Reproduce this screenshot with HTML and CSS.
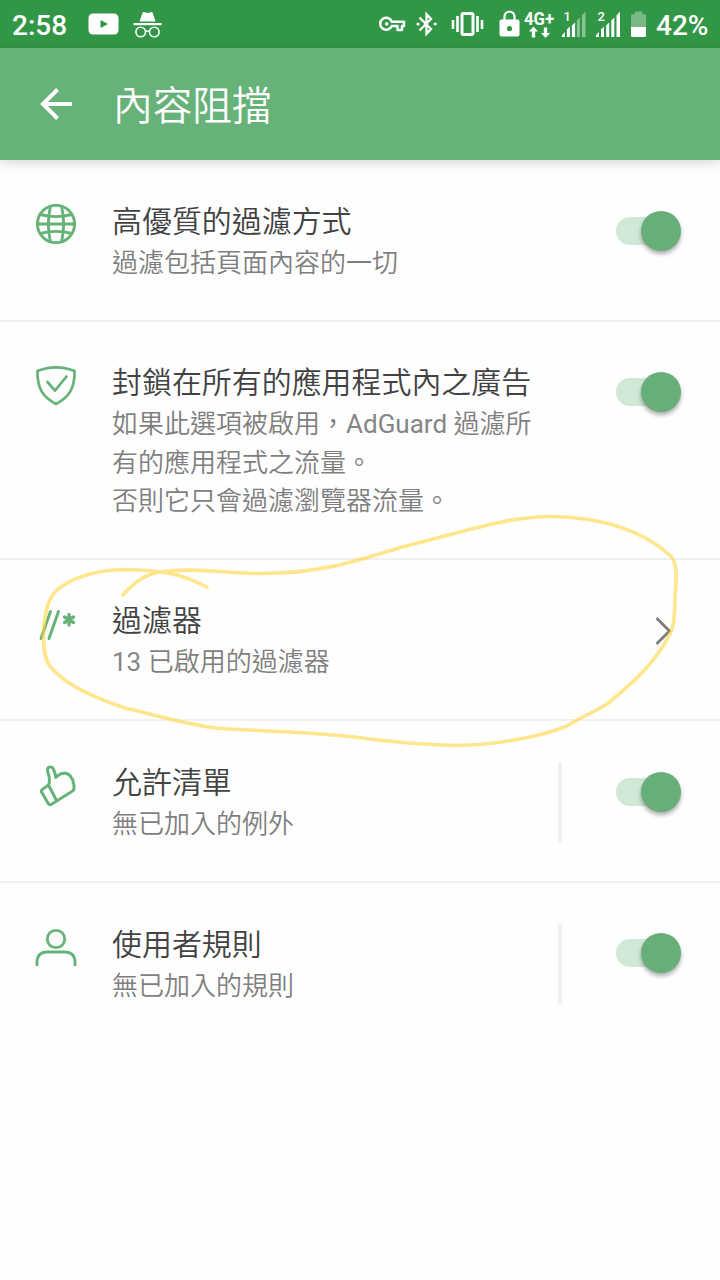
FILE: index.html
```html
<!DOCTYPE html>
<html lang="zh-Hant">
<head>
<meta charset="utf-8">
<title>內容阻擋</title>
<link rel="stylesheet" href="styles.css">
</head>
<body>
<div class="screen">
  <div class="status">
    <span class="clock">2:58</span>
    <svg class="youtube" width="32" height="24" viewBox="88 12 32 24"><rect x="88.500" y="13.500" width="30" height="21" rx="4.500" fill="#fff"/><path d="M100.500 20v8l7.500-4z" fill="#319746"/></svg>
    <svg class="incognito" width="30" height="30" viewBox="133 10 30 30"><path d="M139.500 21.500l3-8.500q.6-1.300 2-.8l3.300.8 3-.8q1.400-.4 2 .8l2.700 8.500z" fill="#fff"/><path d="M133.500 23h28v2.200h-28z" fill="#fff"/><g fill="none" stroke="#fff" stroke-width="1.600"><circle cx="140.700" cy="32" r="4.800"/><circle cx="154.300" cy="32" r="4.800"/><path d="M145.500 31.500q2-1 4 0"/></g></svg>
    <svg class="indicators" width="274" height="36" viewBox="376 8 274 36">
      <g fill="none" stroke="#fff" stroke-width="2.500" stroke-linejoin="round">
        <path d="M391.800 21.700h12.200v4.200h-2v4h-4.500v-4h-5.700a6 6 0 1 1 0-4.200z"/>
        <path stroke-width="2.300" stroke-linejoin="miter" d="M419.500 17.500l11.500 11.500-4.500 4.800V14.200l4.500 4.800-11.500 11.500"/>
        <rect x="462" y="13.500" width="11" height="21" rx="1.500" stroke-width="3"/>
        <path stroke-width="2.600" d="M457.500 16v16M453 20v9M477.500 16v16M482 20v9"/>
        <path stroke-width="2.300" d="M504.500 20v-3.300a5 5 0 0 1 10 0V20"/>
      </g>
      <circle cx="386.700" cy="23.900" r="1.800" fill="#fff"/>
      <circle cx="418" cy="24" r="1.600" fill="#fff"/><circle cx="435.200" cy="24" r="1.600" fill="#fff"/>
      <rect x="499.500" y="19.500" width="20" height="17" rx="2" fill="#fff"/><circle cx="509.500" cy="28.500" r="2.600" fill="#319746"/>
      <path d="M533.500 26.500l4.500 5h-2.800v6h-3.400v-6H529zM545.500 38l-4.500-5h2.800v-5.500h3.400V33h2.800z" fill="#fff"/>
      <text class="network" x="524" y="24.500" textLength="30" lengthAdjust="spacingAndGlyphs">4G+</text>
      <text class="sim" x="563.500" y="20.500">1</text><text class="sim" x="597.500" y="20.500">2</text>
      <path fill="#fff" d="M562 37v-2l3-3v5zM566.900 37v-7.500l3-3V37zM571.900 37V25.500l3.200-3V37z"/>
      <path fill="#8bc394" d="M576.900 37V20.500l3-3V37zM582 37V15.500l3.500-4V37z"/>
      <path fill="#fff" d="M596 37v-2l3-3v5zM601 37v-7.500l3-3V37zM606.200 37V25.500l3-3V37zM611.300 37V20.500l3-3V37zM616.500 37V15.500l3.500-4V37z"/>
      <path fill="#77b884" d="M635 11.500h7V14h2.500q1.500 0 1.500 1.500V27h-15V15.500q0-1.500 1.500-1.500h2.500z"/><path fill="#fff" d="M631 27h15v8.500q0 1.500-1.500 1.500h-12q-1.500 0-1.500-1.500z"/>
    </svg>
    <span class="percent">42%</span>
  </div>
  <header class="appbar">
    <svg class="back" width="36" height="36" viewBox="38 86 36 36" fill="none" stroke="#fff" stroke-width="4"><path d="M72 104H43M57.500 89.500L43 104l14.500 14.500"/></svg>
    <h1 class="heading">內容阻擋</h1>
  </header>
  <main class="list">
    <section class="row">
      <svg class="icon" width="44" height="44" viewBox="34 202 44 44" fill="none" stroke="#67b279" stroke-width="2.900"><circle cx="56" cy="224" r="18.600"/><path d="M37.500 224h37M40 214.500q16 4.200 32 0M40 233.500q16-4.200 32 0M50.500 206q-4.200 18 0 36M61.500 206q4.200 18 0 36"/></svg>
      <div class="copy"><h2 class="title">高優質的過濾方式</h2><p class="desc">過濾包括頁面內容的一切</p></div>
      <div class="action"><span class="toggle"></span></div>
    </section>
    <section class="row">
      <svg class="icon" width="44" height="44" viewBox="34 363.500 44 44" fill="none" stroke="#67b279" stroke-width="2.700" stroke-linejoin="round"><path d="M56 366.800q-10 0-18.600 3.700c0 16 4 25.500 18.600 33 14.600-7.500 18.600-17 18.600-33q-8.600-3.700-18.600-3.700z"/><path stroke-linecap="round" d="M47.500 381.500l7.500 8.700 11.500-14.200"/></svg>
      <div class="copy"><h2 class="title">封鎖在所有的應用程式內之廣告</h2><p class="desc">如果此選項被啟用，<span class="latin">AdGuard </span>過濾所<br>有的應用程式之流量。<br>否則它只會過濾瀏覽器流量。</p></div>
      <div class="action"><span class="toggle"></span></div>
    </section>
    <section class="row">
      <svg class="icon" width="44" height="44" viewBox="34 602 44 44" fill="none" stroke="#67b279" stroke-width="3" stroke-linecap="round"><path d="M50.500 611.500L41 638.500M58.500 611.500L49 638.500"/><path stroke-width="3.300" d="M69 614.500v10.500M64.500 617l9 5.500M73.500 617l-9 5.500"/></svg>
      <div class="copy"><h2 class="title">過濾器</h2><p class="desc"><span class="latin">13 </span>已啟用的過濾器</p></div>
      <div class="action"><svg class="chevron" width="20" height="32" viewBox="654 616 20 32" fill="none" stroke="#7d7d7d" stroke-width="2.800"><path d="M656.500 619L669.500 632 656.500 645"/></svg></div>
    </section>
    <section class="row">
      <svg class="icon" width="44" height="44" viewBox="34 763.500 44 44" fill="none" stroke="#67b279" stroke-width="3" stroke-linejoin="round"><path d="M48.500 785.500c1.800-3.500 1.200-7.500-.8-13.500-1.200-4.800 4-6 5.800-2.300q1.800 3.500 2.200 8.300 4-4.500 9.300-4.300 5 .5 6.300 4.800 2.300 1.500 1.700 4.500 1.300 2.200.9 4.300.8 3-1.700 4.500L51.500 804.700q-2 1.100-3.300-.8l-6.500-11.200q-1-1.700.6-2.700z"/><path d="M48.500 785.500l8 15.500"/></svg>
      <div class="copy"><h2 class="title">允許清單</h2><p class="desc">無已加入的例外</p></div>
      <div class="action split"><span class="toggle"></span></div>
    </section>
    <section class="row">
      <svg class="icon" width="44" height="44" viewBox="34 925 44 44" fill="none" stroke="#67b279" stroke-width="2.800"><circle cx="56" cy="939" r="8.700"/><path d="M37 966v-3.500q0-10.500 10.500-10.500h17q10.500 0 10.500 10.500V966"/></svg>
      <div class="copy"><h2 class="title">使用者規則</h2><p class="desc">無已加入的規則</p></div>
      <div class="action split"><span class="toggle"></span></div>
    </section>
  </main>
  <svg class="scribble" width="720" height="260" viewBox="0 500 720 260"><path d="M123 595C134 582 146 574 160 572C195 567 225 573.500 262 573.500C320 573 350 563 402 547C455 535 500 517 550 516.500C600 517 641 529 671 556C677 564 676.500 575 675.500 590C674 608 676 620 671 632C657 660 637 680 607 704C596 711 581 717 567 726C542 736 500 745 453 745.500C405 744 375 740 350 736.500C300 731 250 731 215 728C180 723 155 715 125 708C95 698 64 685 49 665C43 655 43.500 641 43.500 632C45 613 47 599 58 589C75 576 100 570 125 569.500C160 570 180 573 207 587"/></svg>
</div>
</body>
</html>
```
FILE: styles.css
```css
* { box-sizing: border-box; }
body { margin: 0; background: #fff; font-family: Roboto, "Noto Sans CJK TC", sans-serif; }
.screen { position: relative; width: 720px; height: 1280px; overflow: hidden; background: #fefefe; }
.status { display: flex; align-items: center; height: 48px; padding-left: 12px; background: #319746; color: #fff; }
.clock, .percent { font-size: 28px; font-weight: 500; line-height: 48px; padding-top: 3px; }
.clock { width: 76px; }
.incognito { margin: 2px 0 0 13px; }
.indicators { margin: 4px 6px 0 213px; flex: none; }
.network { font: 700 17.500px Roboto, sans-serif; fill: #fff; }
.sim { font: 500 13px Roboto, sans-serif; fill: #fff; }
.appbar { display: flex; align-items: center; height: 112px; padding-left: 38px; background: #67b279; color: #fff; box-shadow: 0 2px 12px rgba(0, 0, 0, .18); }
.heading { margin: 5px 0 0 39px; font-family: Roboto, "Noto Sans CJK TC DemiLight", "Noto Sans CJK TC", sans-serif; font-size: 39.700px; font-weight: 350; line-height: 56px; }
.row { display: grid; grid-template-columns: 112px 448px 160px; padding: 39px 0 38.200px; border-bottom: 2px solid #f1f1f1; }
.row:last-child { border-bottom-color: transparent; }
.icon { margin: 3px 0 0 34px; }
.copy { padding-top: .8px; margin-bottom: -.8px; font-family: Roboto, "Noto Sans CJK TC DemiLight", "Noto Sans CJK TC", sans-serif; }
.title { margin: 0; font-size: 29.950px; font-weight: 350; line-height: 44px; color: #424242; }
.desc { margin: 0; font-size: 26px; font-weight: 350; line-height: 38.330px; color: #7f7f7f; white-space: nowrap; }
.latin { font-weight: 400; color: #858585; }
.action { height: 80px; margin-top: 2px; padding: 15.500px 0 0 56px; }
.split { margin-left: -2px; padding-left: 54px; border-left: 4px solid #f1f1f1; }
.toggle { display: flex; justify-content: flex-end; align-items: center; width: 65px; height: 28px; border-radius: 14px; background: linear-gradient(to right, #d1e8d7 45px, transparent 45px); }
.toggle::after { content: ""; width: 40px; height: 40px; border-radius: 50%; background: #67ae79; box-shadow: 0 3px 4px rgba(0, 0, 0, .32); }
.chevron { display: block; margin: -1px 0 0 38px; }
.scribble { position: absolute; left: 0; top: 500px; fill: none; stroke: #ffd33d; stroke-opacity: .6; stroke-width: 3.600; stroke-linecap: round; pointer-events: none; }
```
